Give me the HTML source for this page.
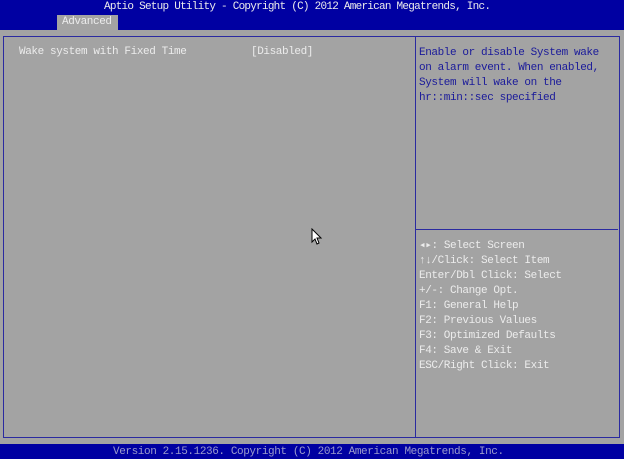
<!DOCTYPE html>
<html><head><style>
body{margin:0;width:624px;height:459px;background:#a3a3a3;position:relative;overflow:hidden;font-family:"Liberation Mono","DejaVu Sans Mono",monospace;font-size:11px;letter-spacing:-0.4px;}
div,span{position:absolute;white-space:pre;}
.top{left:0;top:0;width:624px;height:30px;background:#0000a2;}
.foot{left:0;top:444px;width:624px;height:15px;background:#0000a2;}
.t{color:#ececec;}
.h{color:#1a1a9a;}
</style></head><body>
<div class="top"></div>
<div class="t" style="left:104px;top:1px;letter-spacing:-0.75px;">Aptio Setup Utility - Copyright (C) 2012 American Megatrends, Inc.</div>
<div style="left:57px;top:15px;width:61px;height:15px;background:#a3a3a3;"></div>
<div class="t" style="left:62px;top:16px;">Advanced</div>
<div style="left:3px;top:36px;width:615px;height:400px;border:1px solid #2a2aa0;"></div>
<div style="left:415px;top:36px;width:1px;height:401px;background:#2a2aa0;"></div>
<div style="left:416px;top:229px;width:202px;height:1px;background:#2a2aa0;"></div>
<div class="t" style="left:19px;top:46px;">Wake system with Fixed Time</div>
<div class="t" style="left:251px;top:46px;">[Disabled]</div>
<div class="h" style="left:419px;top:46px;line-height:15px;">Enable or disable System wake
on alarm event. When enabled,
System will wake on the
hr::min::sec specified</div>
<div class="t" style="left:419px;top:239px;line-height:15px;">◂▸: Select Screen
↑↓/Click: Select Item
Enter/Dbl Click: Select
+/-: Change Opt.
F1: General Help
F2: Previous Values
F3: Optimized Defaults
F4: Save &amp; Exit
ESC/Right Click: Exit</div>
<div class="foot"></div>
<div style="left:113px;top:446px;color:#9a9acc;">Version 2.15.1236. Copyright (C) 2012 American Megatrends, Inc.</div>
<svg style="position:absolute;left:311px;top:228px" width="12" height="18" viewBox="0 0 12 18"><path d="M1 1 L1 14 L4 11 L6 16 L8 15 L6 10 L10 10 Z" fill="#fff" stroke="#000" stroke-width="1"/></svg>
</body></html>
